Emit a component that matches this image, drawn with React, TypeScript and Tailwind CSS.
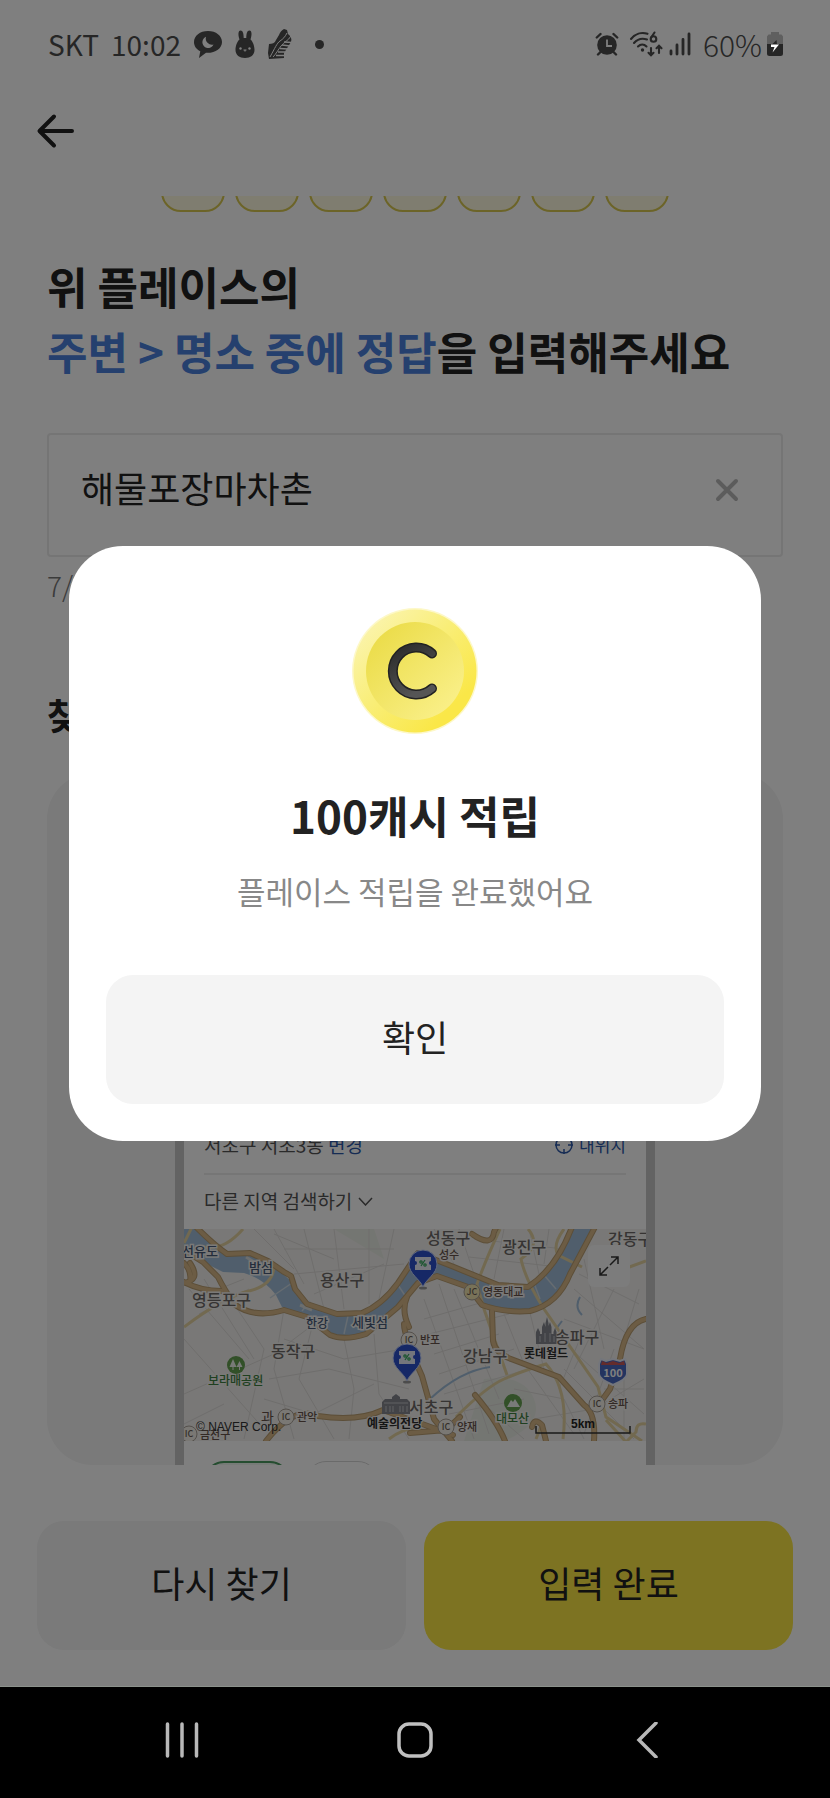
import React, { useState } from 'react';

const pills = [1, 2, 3, 4, 5, 6, 7];

const ChatIcon = () => (
  <svg className="h-[30px] w-[30px]" viewBox="0 0 30 30" aria-hidden="true">
    <path
      d="M15 2C7 2 1 6.800 1 13c0 4 2.300 7.300 6.300 9.300L6 29l7-5.200c9 .6 16-4.300 16-10.800C29 6.800 23 2 15 2z"
      fill="#262626"
    />
    <path
      d="M13 7.800a5.800 5.800 0 1 0 7.500 7.700 6.200 6.200 0 0 1-7.500-7.700z"
      fill="#808080"
    />
  </svg>
);

const RabbitIcon = () => (
  <svg className="h-[30px] w-5" viewBox="0 0 20 30" aria-hidden="true">
    <path
      d="M5.500 1.500C8 1.500 8.700 5 8.700 9h2.600c0-4 .7-7.500 3.200-7.500S17 6 15.500 10.500C18 12.500 19.500 17 19.500 21c0 5-4 8-9.500 8S.5 26 .5 21c0-4 1.500-8.500 4-10.500C3 6 3 1.500 5.500 1.500z"
      fill="#262626"
    />
    <circle cx="5.500" cy="19.500" r="1.200" fill="#808080" />
    <circle cx="14.500" cy="19.500" r="1.200" fill="#808080" />
    <path
      d="M8.500 21h3M10 21v1.500"
      stroke="#808080"
      strokeWidth="1.200"
      fill="none"
    />
  </svg>
);

const ShoeIcon = () => (
  <svg className="h-8 w-[26px]" viewBox="0 0 26 32" aria-hidden="true">
    <path
      d="M2 16c3 0 6-1 7-4l3-5c1-3 3-5 5-6l3 1 1 4c3 2 4 5 3 8l-7 11v5L2 31l-1-6z"
      fill="#262626"
    />
    <path
      d="M20 5c-2 4-4 6-7 8S8 20 3 29M24 8c-3 5-7 6-10 10S9 26 6 29"
      stroke="#808080"
      strokeWidth="1"
      fill="none"
    />
    <path
      d="M17 14l8 .5M15 17l8 1M13 20.500l8 .5M11 24h7M9 27.500h8"
      stroke="#808080"
      strokeWidth="1.400"
    />
  </svg>
);

const AlarmIcon = () => (
  <svg className="h-6 w-6" viewBox="0 0 24 24" aria-hidden="true">
    <circle cx="12" cy="13" r="9.800" fill="#262626" />
    <path
      d="M1.800 5.500L5.500 2M22.200 5.500L18.500 2M5.500 20l-2.500 2.500M18.500 20l2.500 2.500"
      stroke="#262626"
      strokeWidth="2.400"
      strokeLinecap="round"
    />
    <path d="M12 7.500V14h5" stroke="#808080" strokeWidth="1.800" fill="none" />
  </svg>
);

const WifiIcon = () => (
  <svg className="h-[26px] w-[34px]" viewBox="0 0 34 26" aria-hidden="true">
    <g fill="none" stroke="#262626" strokeWidth="2.100" strokeLinecap="round">
      <path d="M2 8C6 2.800 12.500 1 18.500 2.800M5 12c3.500-4 8.500-5 13-3.500M9 15.500c2.500-2.500 6-2.500 8.500 0" />
      <path d="M25.500 1.500L22.200 6.500" />
      <circle cx="24.500" cy="8" r="2.800" />
      <path d="M22 17v7M19.500 21.800l2.500 2.500 2.500-2.500M30 22v-7M27.500 17.200L30 14.700l2.500 2.500" />
    </g>
    <circle cx="13.500" cy="19" r="1.700" fill="#262626" />
  </svg>
);

const SignalIcon = () => (
  <svg className="h-6 w-[22px]" viewBox="0 0 22 24" aria-hidden="true">
    <path
      d="M2 22v-3M8 22v-9M14 22V7.500M20 22V2"
      stroke="#262626"
      strokeWidth="2.800"
      strokeLinecap="round"
    />
  </svg>
);

const BatteryIcon = () => (
  <svg className="h-6 w-[18px]" viewBox="0 0 18 24" aria-hidden="true">
    <path
      d="M5 0h8v2.500h2.500L17 4.500V13H1V4.500l1.500-2H5z"
      fill="#5f5f5f"
    />
    <path
      d="M1 12h16v9.500a2.500 2.500 0 0 1-2.500 2.500h-11A2.500 2.500 0 0 1 1 21.500z"
      fill="#262626"
    />
    <path d="M10.500 8L6 12.500h5z" fill="#262626" />
    <path d="M5 12.500h8L6.500 20.500l2-5.500H5z" fill="#fff" />
  </svg>
);

const StatusBar = () => (
  <div className="relative z-20 flex h-[88px] items-center justify-between pr-[46px] pl-[48px] text-[28px] leading-8 text-[#262626]">
    <div className="flex items-center gap-3">
      <span>SKT</span>
      <span>10:02</span>
      <ChatIcon />
      <RabbitIcon />
      <ShoeIcon />
      <span className="ml-2.5 size-[9px] rounded-full bg-[#262626]" />
    </div>
    <div className="flex items-center">
      <AlarmIcon />
      <span className="ml-2.5">
        <WifiIcon />
      </span>
      <span className="ml-1.5">
        <SignalIcon />
      </span>
      <span className="mr-1 ml-3 text-[30px] font-light">60%</span>
      <BatteryIcon />
    </div>
  </div>
);

type BadgeProps = { x: number; y: number; label: string; fill?: string };

const RoadBadge: React.FC<BadgeProps> = ({ x, y, label, fill = '#f4f0e8' }) => (
  <g>
    <circle cx={x} cy={y} r="8" fill={fill} stroke="#a8a098" />
    <text
      x={x}
      y={y + 3}
      fontSize="9"
      fontWeight="500"
      textAnchor="middle"
      fill="#6b5f55"
    >
      {label}
    </text>
  </g>
);

const MapPin: React.FC<{ x: number; y: number }> = ({ x, y }) => (
  <g>
    <ellipse cx={x} cy={y + 24} rx="4" ry="1.500" fill="#999" />
    <path
      d={`M${x} ${y + 23}C${x - 3} ${y + 15} ${x - 14} ${y + 10} ${x - 14} ${y}a14 14 0 0 1 28 0C${x + 14} ${y + 10} ${x + 3} ${y + 15} ${x} ${y + 23}z`}
      fill="#2c50cc"
      stroke="#c8d4f8"
    />
    <path
      d={`M${x - 8} ${y - 7}h16v4a2 2 0 0 0 0 4v5h-16v-5a2 2 0 0 0 0-4z`}
      fill="#e8ecf8"
    />
    <path
      d={`M${x - 2} ${y + 2}l4-6`}
      stroke="#30a858"
      strokeWidth="1.200"
    />
    <g fill="none" stroke="#30a858" strokeWidth="1.200">
      <circle cx={x - 2} cy={y - 2} r="1.200" />
      <circle cx={x + 2} cy={y + 1} r="1.200" />
    </g>
  </g>
);

const river =
  'M-2-2H14Q28 14 43 23L66 24 86 33 109 54 123 73 153 83 176 83 193 73 209 58 224 38 236 24 253 33 296 49 316 56 344 58 363 41 379 23 389-2H410L403 18 386 43 379 58Q370 76 350 82L308 79 296 71 283 56 253 48 233 54 206 88 186 103 163 108 146 104 123 88 98 78 92 66Q80 50 60 44L39 43 19 33-2 18z';

const minorRoads = [
  'M10 70L60 50M15 85l50-25M5 60l60 70M0 110l80 90M0 165l90-40 40-30M40 60l40 60-20 90M20 50l50 80M100 80l-10 60 20 70',
  'M70 0l40 40M90 0l30 55M120 0l20 80M150 0l10 80M185 0v75M210 0l-15 70M100 20h110M110 45l110-10M130 65l70-30M90 5l60 25',
  'M100 110l60 20 60-10M85 150l60-10 80 20M80 170l50 15 60-30M130 90l-15 60 35 60M160 110l10 50-5 50M190 105l5 60 30 45',
  'M240 70l50 140M255 55l50 150M270 60l45 110M240 90l70-20M245 105l80-20M250 125l65-20M255 145l75-25M260 165l85-25M265 185l75-15',
  'M250 0l20 35M275 0l15 45M320 0l-10 50M345 0l10 45M365 0l-5 35M290 10l90 10M285 28l90 10M320 85l20 50 50 70M345 80l15 60',
  'M395 45l60 30M390 60l70 60M400 30l20 90M430 60l-40 80M455 60l-30 100M380 90l80 30M370 105l90 80M400 100l-25 60M430 120l-30 85',
  'M330 160l50 10 20 40M380 140l70 70M350 190l60-10 50-30M0 195l40-20M420 160h40M440 150v60M300 175l40 35',
];

const yellowRoads = [
  'M59 0Q40 22 20 18M0 98Q40 68 65 62T90 36M8-2L0 14',
  'M316 0Q302 30 293 55L300 80 323 146M344 0q14 16-7 30 4 20 23 50l54 78 8 30 36 24M380 0q-12 16-6 26l24 12M440 40l22-8',
  'M272 188Q302 158 320 150T362 135Q385 160 379 210M205 210q20-15 35-8M462 195q-10-2-10 8l-10 10-20-22M352 210l6-15',
];

const mainRoads = [
  'M12-2Q30 16 43 25L66 24 84 32 100 43 107 47 111 60 123 75 153 85 178 84Q198 76 214 54L234 24 270 38 314 56 344 58Q372 40 388-2',
  'M-2 20L19 33 34 48Q40 60 50 75 70 90 100 81L123 88 146 106Q160 112 182 105L214 78 234 54 253 47 284 58 298 76Q320 84 346 82 374 75 386 45L411-2',
  'M-2 52Q16 62 38 62M0 34q8 8 6 18M-2 54q20-2 8-20',
  'M223 68q-6 14 2 30M220 95q0 12 18 52l12 43 18 22M308 82l1 30q2 12 18 18l48 18 25 28q12 8 10 36M462 90q-20 4-26 40l-10 30-10 14',
  'M82 212Q110 176 134 187q40 6 65-6l70 25M226 204l36-3 14-13M291 166q22 26 30 46M348 198q2-10 10-2l4 16M288 5q20 14 22-2l4-8',
];

const MapView = () => (
  <svg
    className="block w-full"
    viewBox="0 0 462 212"
    role="img"
    aria-label="지도"
  >
    <rect width="462" height="212" fill="#f2f1ee" />
    <path
      d="M300 150q40-5 50 20t-30 42h-40zM150 0h40l10 30z"
      fill="#e9ece4"
    />
    <g fill="none" stroke="#dedbd9" strokeWidth="1">
      {minorRoads.map((d) => (
        <path key={d} d={d} />
      ))}
    </g>
    <path d={river} fill="#a0bdd8" />
    <path
      d="M246 170q30-28 60-32M396 68q-6 10 2 18M372 100l6-8"
      stroke="#a0bdd8"
      strokeWidth="2"
      fill="none"
    />
    <path
      d="M86 69l22-15M118 82l8-10M160 105l4-18M178 86l8 16M214 56l8 12M360 46l12 14M350 54l6 16"
      stroke="#ccd8e2"
      strokeWidth="1.500"
    />
    <path d="M116 76l12 5M62 28l8 5" stroke="#d8dcdc" strokeWidth="3" />
    <g fill="none" stroke="#e4d2a0" strokeWidth="3">
      {yellowRoads.map((d) => (
        <path key={d} d={d} />
      ))}
    </g>
    <g fill="none" strokeLinejoin="round" strokeLinecap="round">
      {mainRoads.map((d) => (
        <path key={d} d={d} stroke="#b89c70" strokeWidth="6" />
      ))}
      {mainRoads.map((d) => (
        <path key={`${d}-fill`} d={d} stroke="#d8b888" strokeWidth="4" />
      ))}
    </g>

    <RoadBadge x={225} y={111} label="IC" />
    <RoadBadge x={102} y={188} label="IC" />
    <RoadBadge x={5} y={205} label="IC" />
    <RoadBadge x={288} y={63} label="JC" fill="#f0e4b0" />
    <RoadBadge x={262} y={198} label="IC" />
    <RoadBadge x={413} y={175} label="IC" />

    <g stroke="#f4f3f0" strokeWidth="3" paintOrder="stroke">
      <g fontSize="16" fontWeight="500" fill="#6c6866">
        <text x="136" y="57">용산구</text>
        <text x="8" y="77">영등포구</text>
        <text x="87" y="128">동작구</text>
        <text x="242" y="15">성동구</text>
        <text x="318" y="24">광진구</text>
        <text x="424" y="16">강동구</text>
        <text x="279" y="133">강남구</text>
        <text x="371" y="114">송파구</text>
        <text x="225" y="184">서초구</text>
      </g>
      <g fontSize="13" fontWeight="500" fill="#485a78">
        <text x="-2" y="27">선유도</text>
        <text x="65" y="43">밤섬</text>
        <text x="168" y="98">세빛섬</text>
        <text x="122" y="99" fontSize="12">한강</text>
      </g>
      <g fontSize="11" fontWeight="500" fill="#66524a">
        <text x="255" y="30">성수</text>
        <text x="299" y="67">영동대교</text>
        <text x="236" y="115">반포</text>
        <text x="113" y="192">관악</text>
        <text x="273" y="202">양재</text>
        <text x="424" y="179">송파</text>
        <text x="16" y="210">금천구</text>
      </g>
      <text x="77" y="193" fontSize="14" fill="#66524a">과</text>
      <g fontSize="12" fontWeight="500" fill="#3f8040">
        <text x="24" y="156">보라매공원</text>
        <text x="312" y="194">대모산</text>
      </g>
    </g>

    <circle cx="52" cy="136" r="9" fill="#64a050" />
    <path
      d="M49 130l3.500 8h-7zM55.500 132l3 6h-6zM48.500 138h1v3h-1zM55 138h1v3h-1z"
      fill="#f0f4f0"
    />
    <circle cx="329" cy="174" r="9" fill="#64a050" />
    <path d="M323 178l4-7 2 2 2-3 5 8z" fill="#f0f4f0" />

    {/* 롯데월드 castle and 예술의전당 hall */}
    <path
      d="M352 115v-12l2-4 2 4v2h2v-7l2-5 1.500 5v-4l1.500-6 1.500 6v3l1.500-4 1.500 5v7h2v-2l1.500-4 1.500 4v12z"
      fill="#84868e"
    />
    <path
      d="M198 185v-12l3-3h7v-2l4-3 4 3v2h7l3 3v12z"
      fill="#84868e"
    />
    <path
      d="M200 174h24M202 177v6M206 177v6M209 177v6M216 177v6M219 177v6M223 177v6M356 107v6M361 104v9M366 104v9M370 107v6"
      stroke="#c0c2c8"
      strokeWidth="1"
    />
    <g
      fontSize="12"
      fontWeight="700"
      fill="#2c2c2c"
      stroke="#f4f3f0"
      strokeWidth="2"
      paintOrder="stroke"
    >
      <text x="340" y="129">롯데월드</text>
      <text x="183" y="199">예술의전당</text>
    </g>

    <path
      d="M417 130l5 2 7-2 7 2 5-2 2 5v10q0 5-14 11-14-6-14-11v-10z"
      fill="#4868c0"
      stroke="#e8ecf8"
      strokeWidth="2"
    />
    <path d="M418 132l5 2 6-2 6 2 5-2 1 4h-24z" fill="#c85858" />
    <text
      x="429"
      y="148"
      fontSize="11"
      fontWeight="700"
      textAnchor="middle"
      fill="#fff"
    >
      100
    </text>

    <MapPin x={239} y={35} />
    <MapPin x={223} y={129} />

    <rect x="404" y="16" width="42" height="42" rx="6" fill="#f8f8f8" />
    <path
      d="M426 36l8-8M427 28h7v7M424 38l-8 8M416 39v7h7"
      stroke="#333"
      strokeWidth="1.500"
      fill="none"
    />

    <text
      x="12"
      y="202"
      fontSize="12"
      fontFamily="Liberation Sans, sans-serif"
      fill="#333"
    >
      © NAVER Corp.
    </text>
    <text
      x="399"
      y="199"
      fontSize="12"
      fontWeight="700"
      fontFamily="Liberation Sans, sans-serif"
      textAnchor="middle"
      fill="#222"
    >
      5km
    </text>
    <path d="M352 197v7h94v-7" stroke="#333" strokeWidth="1.500" fill="none" />
  </svg>
);

const PhonePreview = () => (
  <div className="w-full max-w-[480px] border-x-9 border-[#c6c6c6] bg-white text-[19px] leading-7 text-[#555]">
    <div className="mx-5 flex items-center justify-between border-b-2 border-[#ececec] pb-3.5">
      <p>
        서초구 서초3동{' '}
        <a href="#region" className="text-[#2c58a8]">
          변경
        </a>
      </p>
      <a
        href="#here"
        className="flex items-center gap-1.5 text-[17px] text-[#2c58a8]"
      >
        <svg className="size-[18px]" viewBox="0 0 18 18" aria-hidden="true">
          <g fill="none" stroke="currentColor" strokeWidth="1.500">
            <circle cx="9" cy="9" r="8" />
            <path d="M9 0v5M9 13v5M0 9h5M13 9h5" />
          </g>
        </svg>
        내위치
      </a>
    </div>
    <button className="mx-5 flex h-[54px] items-center gap-1.5 pb-0.5">
      다른 지역 검색하기
      <svg className="h-[9px] w-[15px]" viewBox="0 0 15 9" aria-hidden="true">
        <path
          d="M1 1l6.500 7L14 1"
          stroke="currentColor"
          strokeWidth="1.500"
          fill="none"
        />
      </svg>
    </button>
    <MapView />
    <div className="mt-5 flex h-1 gap-4 overflow-hidden px-5">
      <div className="h-10 w-[86px] shrink-0 rounded-full border-2 border-[#4a9a60] bg-[#eef6f0]" />
      <div className="h-10 w-[72px] shrink-0 rounded-full border border-[#d4d4d4]" />
    </div>
  </div>
);

const CoinIcon = () => (
  <svg className="size-32" viewBox="0 0 128 128" aria-hidden="true">
    <defs>
      <linearGradient id="coin-rim" x1="0.1" y1="0.1" x2="0.8" y2="0.8">
        <stop offset="0" stopColor="#fbf4ae" />
        <stop offset="0.5" stopColor="#f9ee78" />
        <stop offset="1" stopColor="#fae748" />
      </linearGradient>
      <linearGradient id="coin-face" x1="0.1" y1="0.1" x2="0.9" y2="0.9">
        <stop offset="0" stopColor="#ebdc48" />
        <stop offset="1" stopColor="#faf08a" />
      </linearGradient>
      <linearGradient id="coin-mark" x1="0" y1="0" x2="0.5" y2="1">
        <stop offset="0" stopColor="#2a2a2a" />
        <stop offset="1" stopColor="#555" />
      </linearGradient>
    </defs>
    <circle cx="64" cy="64" r="63" fill="#fdf8c8" />
    <circle cx="64" cy="64" r="61.500" fill="url(#coin-rim)" />
    <circle cx="64" cy="64" r="49" fill="url(#coin-face)" />
    <path
      d="M81 46.500A23.500 23.500 0 1 0 81 81.500"
      fill="none"
      stroke="#222"
      strokeWidth="10"
      strokeLinecap="round"
    />
    <path
      d="M81 46.500A23.500 23.500 0 1 0 81 81.500"
      fill="none"
      stroke="url(#coin-mark)"
      strokeWidth="7"
      strokeLinecap="round"
    />
  </svg>
);

const RewardDialog: React.FC<{ onConfirm: () => void }> = ({ onConfirm }) => (
  <div className="absolute inset-0 z-10 flex items-center justify-center bg-black/50 px-[69px] pt-px">
    <div
      role="dialog"
      aria-modal="true"
      aria-labelledby="reward-title"
      className="flex w-full flex-col items-center rounded-[54px] bg-white px-[37px] pt-[61px] pb-[37px]"
    >
      <CoinIcon />
      <h2
        id="reward-title"
        className="mt-12 text-[44px] leading-[64px] font-bold text-[#222]"
      >
        100캐시 적립
      </h2>
      <p className="mt-[22px] text-[31px] leading-[44px] text-[#888]">
        플레이스 적립을 완료했어요
      </p>
      <button
        onClick={onConfirm}
        className="mt-[62px] h-[129px] w-full rounded-[27px] bg-[#f4f4f4] pb-2 text-4xl text-[#222]"
      >
        확인
      </button>
    </div>
  </div>
);

const NavBar = () => (
  <nav className="flex h-[112px] items-center border-t border-[#8c928c] bg-black px-[66px] pb-1.5">
    <button aria-label="최근 앱" className="flex flex-1 justify-center">
      <svg className="h-9 w-9" viewBox="0 0 36 36">
        <path
          d="M3.500 2v32M18 2v32M32.500 2v32"
          stroke="#b8b8b8"
          strokeWidth="3.500"
          strokeLinecap="round"
        />
      </svg>
    </button>
    <button aria-label="홈" className="flex flex-1 justify-center">
      <svg className="h-9 w-9" viewBox="0 0 36 36">
        <rect
          x="2"
          y="2"
          width="32"
          height="32"
          rx="10"
          fill="none"
          stroke="#c0c0c0"
          strokeWidth="3.500"
        />
      </svg>
    </button>
    <button aria-label="뒤로" className="flex flex-1 justify-center">
      <svg className="h-9 w-9" viewBox="0 0 36 36">
        <path
          d="M26 1L9 18l17 17"
          fill="none"
          stroke="#b8b8b8"
          strokeWidth="3.500"
          strokeLinecap="round"
        />
      </svg>
    </button>
  </nav>
);

const App: React.FC = () => {
  const [answer, setAnswer] = useState<string>('해물포장마차촌');
  const [open, setOpen] = useState<boolean>(true);

  return (
    <div className="flex min-h-screen flex-col bg-white font-['Noto_Sans_CJK_KR',sans-serif] text-[#222]">
      <div className="relative flex flex-1 flex-col">
        <StatusBar />
        <header className="flex h-[108px] items-center px-9 pb-[22px]">
          <button aria-label="뒤로 가기">
            <svg className="h-9 w-10" viewBox="0 0 40 36">
              <path
                d="M18 3.500L3.500 18 18 32.500M4 18h32"
                fill="none"
                stroke="#222"
                strokeWidth="4"
                strokeLinecap="round"
                strokeLinejoin="round"
              />
            </svg>
          </button>
        </header>

        <main className="flex-1 px-[47px]">
          <div className="flex h-4 items-end justify-center gap-2.5 overflow-hidden">
            {pills.map((n) => (
              <div
                key={n}
                className="h-10 w-16 shrink-0 rounded-[20px] border-2 border-[#d8c850] bg-[#fffbe0]"
              />
            ))}
          </div>

          <h1 className="mt-[42px] text-[44px] leading-[65px] font-bold">
            위 플레이스의
            <br />
            <span className="text-[#4a80dc]">주변 &gt; 명소 중에 정답</span>을
            입력해주세요
          </h1>

          <div className="mt-[49px] flex h-[124px] items-center rounded border-2 border-[#ebebeb] pr-[42px] pb-2.5 pl-8">
            <input
              aria-label="정답"
              value={answer}
              onChange={(e) => setAnswer(e.target.value)}
              className="min-w-0 flex-1 bg-transparent pb-1.5 text-4xl outline-none"
            />
            <button aria-label="지우기" onClick={() => setAnswer('')}>
              <svg className="size-6" viewBox="0 0 24 24">
                <path
                  d="M3 3l18 18M21 3L3 21"
                  stroke="#b8b8b8"
                  strokeWidth="4"
                  strokeLinecap="round"
                />
              </svg>
            </button>
          </div>
          <p className="mt-2 text-[28px] leading-10 font-light text-[#777]">
            {answer.length}/7
          </p>

          <h2 className="mt-[81px] text-4xl leading-[56px] font-bold">
            찾는 방법
          </h2>
          <div className="mt-[31px] flex min-h-[692px] items-end justify-center overflow-hidden rounded-[46px] bg-[#f4f4f4]">
            <PhonePreview />
          </div>
        </main>

        <footer className="flex gap-[18px] px-[37px] pt-14 pb-9">
          <button className="h-[129px] flex-1 rounded-[27px] bg-[#f4f4f4] pb-2 text-4xl">
            다시 찾기
          </button>
          <button className="h-[129px] flex-1 rounded-[27px] bg-[#fae644] pb-2 text-4xl">
            입력 완료
          </button>
        </footer>

        {open && <RewardDialog onConfirm={() => setOpen(false)} />}
      </div>
      <NavBar />
    </div>
  );
};

export default App;
